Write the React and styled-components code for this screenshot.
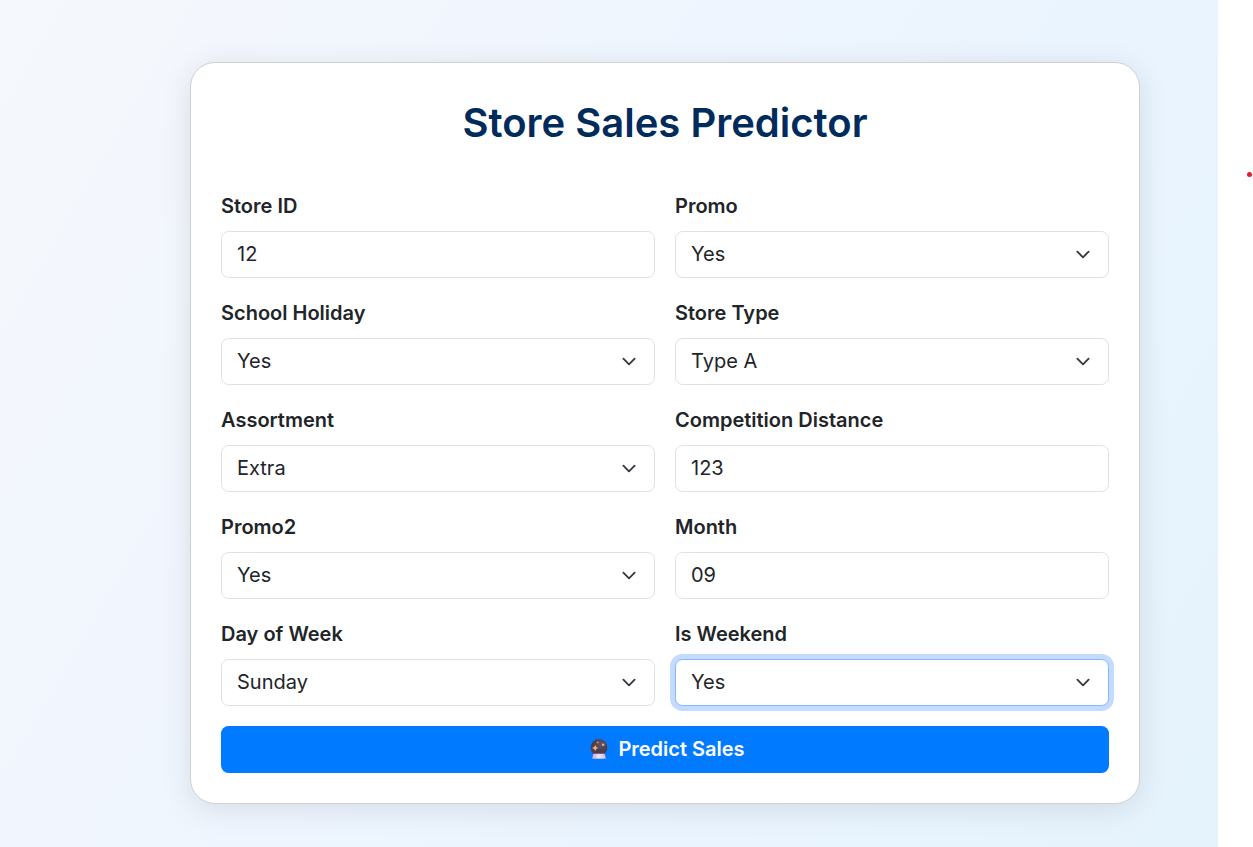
import React from "react";
import styled, { createGlobalStyle } from "styled-components";

const GlobalStyle = createGlobalStyle`
  *, *::before, *::after { box-sizing: border-box; }
  html, body { margin: 0; background: #fff; overflow: hidden; }
  body {
    font-family: Inter, "Liberation Sans", sans-serif;
    font-size: 20px;
    line-height: 30px;
    color: #212529;
  }
`;

const Page = styled.div`
  display: flex;
  height: 847px;
`;

const Backdrop = styled.main`
  width: 1218px;
  padding: 62px 78px 43px 190px;
  background: linear-gradient(120deg, #f5f8fc 0%, #f1f6fe 30%, #e9f4fe 72%, #e5f3fd 100%);
`;

const Margin = styled.aside`
  flex: 1;
  display: flex;
  justify-content: flex-end;
  padding: 172px 1px 0 0;
`;

const Dot = styled.i`
  width: 5px;
  height: 5px;
  border-radius: 50%;
  background: #e81c24;
`;

const Card = styled.section`
  width: 950px;
  height: 742px;
  padding: 36px 30px 30px;
  border: 1px solid #cfd0d1;
  border-radius: 25px;
  background: #fff;
  box-shadow: 0 5px 31px rgba(0, 0, 0, 0.1);
`;

const Title = styled.h1`
  margin: 0 0 44px;
  font-size: 40px;
  line-height: 48px;
  font-weight: 600;
  text-align: center;
  color: #002b5b;
`;

const Form = styled.form`
  display: grid;
  grid-template-columns: 1fr 1fr;
  gap: 20px;
`;

const Field = styled.div`
  display: flex;
  flex-direction: column;
  gap: 10px;
`;

const Label = styled.label`
  font-weight: 560;
`;

const Control = styled.div`
  display: flex;
  align-items: center;
  justify-content: space-between;
  height: 47px;
  padding: 0 15px;
  border: 1px solid ${(p) => (p.$focused ? "#86b7fe" : "#dee2e6")};
  border-radius: 7.5px;
  background: #fff;
  box-shadow: ${(p) => (p.$focused ? "0 0 0 5px rgba(13, 110, 253, 0.25)" : "none")};
`;

const Value = styled.span`
  position: relative;
  top: -1px;
`;

const Chevron = styled.svg`
  width: 20px;
  height: 15px;
`;

const Submit = styled.button`
  grid-column: 1 / -1;
  display: flex;
  align-items: center;
  justify-content: center;
  gap: 9px;
  height: 47px;
  padding: 0 0 2px 4px;
  border: 0;
  border-radius: 7.5px;
  background: #007bff;
  color: #fff;
  font: inherit;
  font-weight: 600;
`;

const Orb = styled.svg`
  width: 20px;
  height: 22px;
`;

const fields = [
  { label: "Store ID", value: "12" },
  { label: "Promo", value: "Yes", select: true },
  { label: "School Holiday", value: "Yes", select: true },
  { label: "Store Type", value: "Type A", select: true },
  { label: "Assortment", value: "Extra", select: true },
  { label: "Competition Distance", value: "123" },
  { label: "Promo2", value: "Yes", select: true },
  { label: "Month", value: "09" },
  { label: "Day of Week", value: "Sunday", select: true },
  { label: "Is Weekend", value: "Yes", select: true, focused: true },
];

function CrystalBall() {
  return (
    <Orb viewBox="0 0 20 22" aria-hidden="true">
      <defs>
        <radialGradient id="glass" cx="0.6" cy="0.3" r="0.75">
          <stop offset="0" stopColor="#65536b" />
          <stop offset="0.55" stopColor="#463e50" />
          <stop offset="1" stopColor="#5a3b47" />
        </radialGradient>
        <linearGradient id="base" x1="0" x2="1">
          <stop offset="0" stopColor="#c5a3dc" />
          <stop offset="0.5" stopColor="#f3e4fa" />
          <stop offset="1" stopColor="#cdb0e3" />
        </linearGradient>
      </defs>
      <circle cx="10" cy="9.5" r="8.4" fill="url(#glass)" />
      <path d="M4.3 15.7h11.4l1.1 4.2q.1.8-.8.8H4q-.9 0-.8-.8z" fill="url(#base)" />
      <path d="M6.2 6.8l1 2.2 2.3 1-2.3 1-1 2.3-1-2.3-2.2-1 2.2-1z" fill="#f4b26a" />
      <path d="M8.8 3l.4 1.1 1.2.4-1.2.4-.4 1.1-.4-1.1-1.2-.4 1.2-.4z" fill="#d89a57" />
      <circle cx="14.2" cy="6.8" r="1.3" fill="#f2b35c" />
    </Orb>
  );
}

export default function App() {
  return (
    <Page>
      <GlobalStyle />
      <Backdrop>
        <Card>
          <Title>Store Sales Predictor</Title>
          <Form>
            {fields.map((f) => (
              <Field key={f.label}>
                <Label>{f.label}</Label>
                <Control $focused={f.focused}>
                  <Value>{f.value}</Value>
                  {f.select && (
                    <Chevron viewBox="0 0 16 16" fill="none">
                      <path
                        d="m2 5 6 6 6-6"
                        stroke="#343a40"
                        strokeWidth="2"
                        strokeLinecap="round"
                        strokeLinejoin="round"
                      />
                    </Chevron>
                  )}
                </Control>
              </Field>
            ))}
            <Submit type="button">
              <CrystalBall />
              <span>Predict Sales</span>
            </Submit>
          </Form>
        </Card>
      </Backdrop>
      <Margin>
        <Dot />
      </Margin>
    </Page>
  );
}
